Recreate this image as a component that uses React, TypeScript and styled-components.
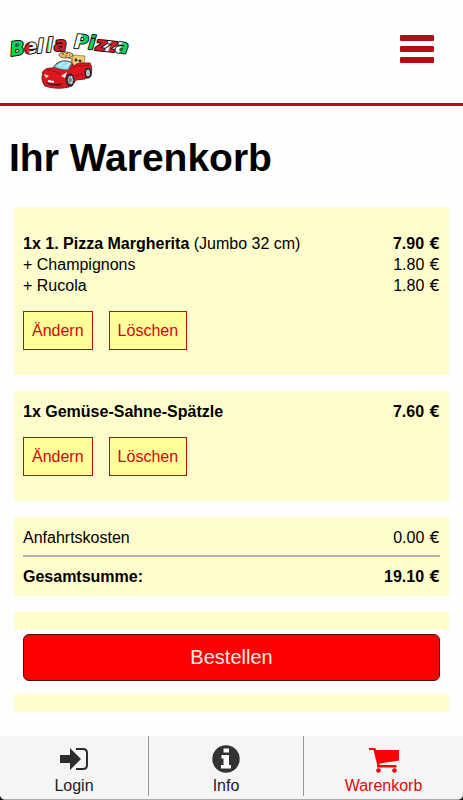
import React from "react";
import styled, { createGlobalStyle } from "styled-components";

const GlobalStyle = createGlobalStyle`
  *, *::before, *::after { box-sizing: border-box; }
  body {
    margin: 0;
    background: #fefefe;
    color: #000;
    font: 16px/21px "Liberation Sans", Arial, Helvetica, sans-serif;
  }
`;

const Page = styled.div`
  min-height: 100vh;
  display: flex;
  flex-direction: column;
`;

const Header = styled.header`
  display: flex;
  align-items: flex-start;
  justify-content: space-between;
  height: 106px;
  padding: 30px 29px 0 8px;
  border-bottom: 3px solid #b90d18;
`;

const LogoLink = styled.a`
  display: block;
  svg { display: block; overflow: visible; }
`;

const MenuButton = styled.button`
  display: flex;
  flex-direction: column;
  gap: 5px;
  margin-top: 5px;
  padding: 0;
  border: 0;
  background: none;
  cursor: pointer;
`;

const MenuBar = styled.span`
  width: 34px;
  height: 6px;
  border-radius: 1px;
  background: #b40e14;
`;

const Main = styled.main`
  flex: 1;
  padding: 0 14px 24px;
`;

const Title = styled.h1`
  margin: 29px -5px 27px;
  font-size: 39px;
  line-height: 45px;
`;

const Card = styled.section<{ $pad: string }>`
  margin-bottom: 16px;
  padding: ${(p) => p.$pad};
  background: #fffdcc;
`;

const Row = styled.div<{ $bold?: boolean }>`
  display: flex;
  justify-content: space-between;
  font-weight: ${(p) => (p.$bold ? 700 : 400)};
`;

const PriceBox = styled.span`
  display: flex;
  gap: 5px;
`;

const Currency = styled.span`
  font-family: Inter, "Liberation Sans", sans-serif;
`;

const Actions = styled.div`
  display: flex;
  gap: 16px;
  margin-top: 15px;
`;

const SmallButton = styled.button`
  height: 39px;
  padding: 0 8px;
  border: 1px solid #c40c0c;
  background: #fffe99;
  color: #d0080c;
  font: inherit;
  cursor: pointer;
`;

const Divider = styled.hr`
  margin: 7px 0 9px;
  border: 0;
  border-top: 2px solid #b4b2b4;
`;

const Strip = styled.div`
  height: 18px;
  background: #fffdcc;
`;

const OrderButton = styled.button`
  display: block;
  width: calc(100% - 18px);
  height: 47px;
  margin: 4px 9px 13px;
  border: 1px solid #501010;
  border-radius: 6px;
  background: #ff0000;
  color: #ffe9e9;
  font: inherit;
  font-size: 20px;
  cursor: pointer;
`;

const NavBackdrop = styled.div`
  background: linear-gradient(#f5f5f5 50%, #000 50%);
`;

const Nav = styled.nav`
  display: grid;
  grid-template-columns: 148fr 155fr 160fr;
  height: 64px;
  padding-bottom: 5px;
  border-bottom: 1px solid #a9a9a9;
  border-radius: 0 0 5px 5px;
  background: #f5f5f5;
`;

const NavItem = styled.a<{ $active?: boolean }>`
  display: flex;
  flex-direction: column;
  align-items: center;
  padding-top: 8px;
  color: ${(p) => (p.$active ? "#e0080c" : "#222")};
  text-decoration: none;
  line-height: 20px;

  & + & { border-left: 1px solid #999; }
  svg { display: block; margin-bottom: 2px; }
`;

const LogoLetter = styled.text`
  font: italic 700 19px "DejaVu Sans", sans-serif;
  stroke: #111;
  stroke-width: 2px;
  stroke-linejoin: round;
  paint-order: stroke;
`;

const letters = [
  { c: "B", x: 3, y: 26, r: -8, f: "green" },
  { c: "e", x: 17, y: 24, r: -7, f: "redWhite" },
  { c: "l", x: 29, y: 23, r: -2, f: "white" },
  { c: "l", x: 38, y: 22, r: 0, f: "greenWhite" },
  { c: "a", x: 46, y: 21, r: 0, f: "red" },
  { c: "P", x: 66, y: 18, r: 3, f: "whiteGreen" },
  { c: "i", x: 80, y: 19, r: 5, f: "green" },
  { c: "z", x: 87, y: 20, r: 6, f: "red" },
  { c: "z", x: 97, y: 21, r: 7, f: "whiteRed" },
  { c: "a", x: 107, y: 22, r: 8, f: "whiteGreen" },
];

const gradients = [
  { id: "green", a: "#0bd35b", b: "#0bd35b" },
  { id: "white", a: "#fff", b: "#fff" },
  { id: "red", a: "#d91c28", b: "#d91c28" },
  { id: "greenWhite", a: "#0bd35b", b: "#fff" },
  { id: "whiteGreen", a: "#fff", b: "#0bd35b" },
  { id: "redWhite", a: "#e11b28", b: "#fff" },
  { id: "whiteRed", a: "#fff", b: "#d91c28" },
];

function Logo() {
  return (
    <svg width="124" height="64" viewBox="0 0 124 64" role="img" aria-label="Bella Pizza">
      <defs>
        {gradients.map((g) => (
          <linearGradient key={g.id} id={g.id} x1="0" x2="1" y1="0" y2="0.3">
            <stop offset="0.45" stopColor={g.a} />
            <stop offset="0.6" stopColor={g.b} />
          </linearGradient>
        ))}
      </defs>
      {letters.map((l, i) => (
        <LogoLetter key={i} x={l.x} y={l.y} fill={`url(#${l.f})`} transform={`rotate(${l.r} ${l.x} ${l.y})`}>
          {l.c}
        </LogoLetter>
      ))}
      <g transform="translate(0 -3)">
        <path d="M65 28l12 1-2 14-11-2z" fill="#f0cf7c" stroke="#8b6a2b" strokeWidth=".7" />
        <path d="M67 32h2v2h-2zM71 33h2v2h-2zM68 37l5 .5" fill="#443418" stroke="#443418" strokeWidth=".8" />
        <path d="M58 30l6 2-1 4" fill="none" stroke="#a67b3b" strokeWidth="1.2" />
        <ellipse cx="58" cy="28" rx="7" ry="3" fill="#e9bd68" stroke="#554022" strokeWidth=".8" />
        <path d="M54 27h2M58 26.500h2M57 29h2M61 28h1" stroke="#8a3e20" strokeWidth="1" />
        <path d="M34 46c3-5 6-5 11-5 4-6 7-7 12-7 4 0 7 1 9 5 4-4 10-3 16-3 2 3 2 7 1 13l-6 3-9 1-4 6c-8 3-18 3-27 0-3-4-4-8-2-13z" fill="#dc1721" stroke="#76131a" strokeWidth=".9" />
        <path d="M46 40c4-5 7-6 11-6 3 0 5 1 7 2l-4 7c-5 0-9-1-14-3z" fill="#91e5ed" stroke="#49595d" strokeWidth=".8" />
        <path d="M51 39l5-4M57 40l5-4" stroke="#e8ffff" />
        <path d="M62 42c5-3 10-4 14-3l5-1M39 43c6 0 10 2 14 5M67 49l8-2" fill="none" stroke="#9d1019" strokeWidth="1" />
        <path d="M36 47l5 2-3 2zM53 49l6-4-2 6z" fill="#ffe7da" />
        <path d="M36 55l5 1 8 1 6-1-4 3-10-1z" fill="#5d151a" />
        <path d="M40 53l6 1v2l-6-1z" fill="#fff" />
        <ellipse cx="62" cy="53" rx="4.500" ry="6.500" fill="#262729" />
        <ellipse cx="62.500" cy="53" rx="2.700" ry="4.300" fill="#c9d5d8" />
        <path d="M62 49v8M60 51l5 4M65 51l-5 4" stroke="#555" strokeWidth=".8" />
        <ellipse cx="80" cy="46" rx="3.500" ry="5.500" fill="#262729" />
        <ellipse cx="80" cy="46" rx="2" ry="3.500" fill="#b8c1c4" />
      </g>
    </svg>
  );
}

const LoginIcon = () => (
  <svg width="30" height="30" viewBox="0 0 30 30" aria-hidden="true">
    <path d="M1 11h10V4l11 11-11 11v-7H1z" fill="#2c2c2c" />
    <path d="M17 5h7q4 0 4 4v12q0 4-4 4h-7" fill="none" stroke="#2c2c2c" strokeWidth="2" />
  </svg>
);

const InfoIcon = () => (
  <svg width="30" height="30" viewBox="0 0 30 30" aria-hidden="true">
    <circle cx="15" cy="15" r="13.700" fill="#333" />
    <path d="M12.500 4.500h5.500v4h-5.500zM10.500 11h7.500v10h2v3.500h-10V21h2.500v-6.500h-2z" fill="#fff" />
  </svg>
);

const CartIcon = () => (
  <svg width="30" height="30" viewBox="0 0 30 30" aria-hidden="true">
    <path d="M0 4h6l1.500 2H30v10.500l-19.500 3v1.500h17v2.500H8v-3.500L4.500 6H0z" fill="#f00" />
    <circle cx="9.500" cy="26.500" r="2.300" fill="#f00" />
    <circle cx="25.500" cy="26.500" r="2.300" fill="#f00" />
  </svg>
);

function Price({ amount }: { amount: string }) {
  return <PriceBox><span>{amount}</span><Currency>€</Currency></PriceBox>;
}

function ItemActions() {
  return (
    <Actions>
      <SmallButton type="button">Ändern</SmallButton>
      <SmallButton type="button">Löschen</SmallButton>
    </Actions>
  );
}

export default function App() {
  return (
    <Page>
      <GlobalStyle />
      <Header>
        <LogoLink href="#"><Logo /></LogoLink>
        <MenuButton type="button" aria-label="Menü">
          <MenuBar /><MenuBar /><MenuBar />
        </MenuButton>
      </Header>
      <Main>
        <Title>Ihr Warenkorb</Title>
        <Card $pad="26px 9px 25px">
          <Row>
            <span><b>1x 1. Pizza Margherita</b> (Jumbo 32 cm)</span>
            <b><Price amount="7.90" /></b>
          </Row>
          <Row><span>+ Champignons</span><Price amount="1.80" /></Row>
          <Row><span>+ Rucola</span><Price amount="1.80" /></Row>
          <ItemActions />
        </Card>
        <Card $pad="10px 9px 25px">
          <Row $bold><span>1x Gemüse-Sahne-Spätzle</span><Price amount="7.60" /></Row>
          <ItemActions />
        </Card>
        <Card $pad="10px 9px 9px">
          <Row><span>Anfahrtskosten</span><Price amount="0.00" /></Row>
          <Divider />
          <Row $bold><span>Gesamtsumme:</span><Price amount="19.10" /></Row>
        </Card>
        <Strip />
        <OrderButton type="button">Bestellen</OrderButton>
        <Strip />
      </Main>
      <NavBackdrop>
        <Nav>
          <NavItem href="#login"><LoginIcon />Login</NavItem>
          <NavItem href="#info"><InfoIcon />Info</NavItem>
          <NavItem href="#warenkorb" $active><CartIcon />Warenkorb</NavItem>
        </Nav>
      </NavBackdrop>
    </Page>
  );
}
